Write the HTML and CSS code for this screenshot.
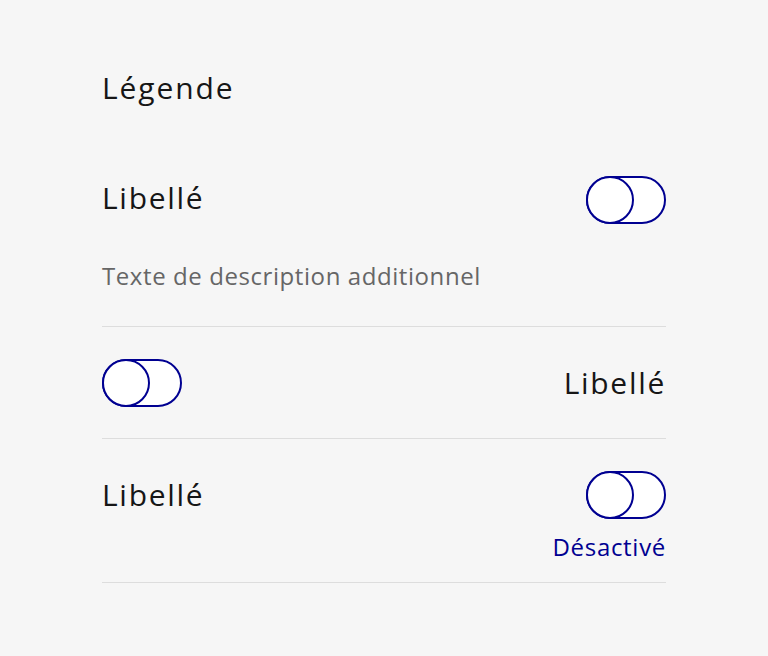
FILE: index.html
```html
<!DOCTYPE html>
<html lang="fr">
<head>
<meta charset="utf-8">
<title>Interrupteurs</title>
<link rel="stylesheet" href="styles.css">
</head>
<body>
<fieldset class="group">
  <legend class="legend">Légende</legend>

  <div class="item item-first">
    <div class="row">
      <span class="label label-first">Libellé</span>
      <span class="toggle" role="switch" aria-checked="false"></span>
    </div>
    <p class="hint">Texte de description additionnel</p>
  </div>

  <div class="item item-second">
    <div class="row">
      <span class="toggle" role="switch" aria-checked="false"></span>
      <span class="label">Libellé</span>
    </div>
  </div>

  <div class="item item-third">
    <div class="row">
      <span class="label">Libellé</span>
      <span class="toggle" role="switch" aria-checked="false"></span>
    </div>
    <p class="state">Désactivé</p>
  </div>
</fieldset>
</body>
</html>
```

FILE: styles.css
```css
html, body {
  margin: 0;
  padding: 0;
  background: #f6f6f6;
}

body {
  font-family: "Open Sans", "Noto Sans", sans-serif;
  color: #161616;
}

.group {
  margin: 0 0 0 102px;
  padding: 64px 0 0 0;
  border: 0;
  width: 564px;
  min-width: 0;
  display: block;
}

.legend {
  float: left;
  width: 100%;
  padding: 0;
  margin: 0;
  font-size: 30px;
  line-height: 48px;
  letter-spacing: 1.9px;
  color: #161616;
}

.item {
  clear: both;
  border-bottom: 1px solid #dddddd;
}

.item-first {
  padding: 32px 0 34px;
  margin-top: 80px;
}

.item-second {
  padding: 32px 0 31px;
}

.item-third {
  padding: 32px 0 19px;
}

.row {
  display: flex;
  justify-content: space-between;
  align-items: flex-start;
  height: 48px;
}

.label {
  font-size: 30px;
  line-height: 48px;
  letter-spacing: 1.7px;
  color: #161616;
}

.label-first {
  line-height: 44px;
}

.toggle {
  position: relative;
  box-sizing: border-box;
  width: 80px;
  height: 48px;
  border: 2px solid #000091;
  border-radius: 24px;
  background: #ffffff;
  flex: none;
}

.toggle::before {
  content: "";
  position: absolute;
  left: -2px;
  top: -2px;
  box-sizing: border-box;
  width: 48px;
  height: 48px;
  border: 2px solid #000091;
  border-radius: 50%;
  background: #ffffff;
}

.hint {
  margin: 36px 0 0;
  font-size: 24px;
  line-height: 32px;
  letter-spacing: 0.58px;
  color: #666666;
}

.state {
  margin: 12px 0 0;
  text-align: right;
  font-size: 24px;
  line-height: 32px;
  letter-spacing: 0.7px;
  color: #000091;
}
```
